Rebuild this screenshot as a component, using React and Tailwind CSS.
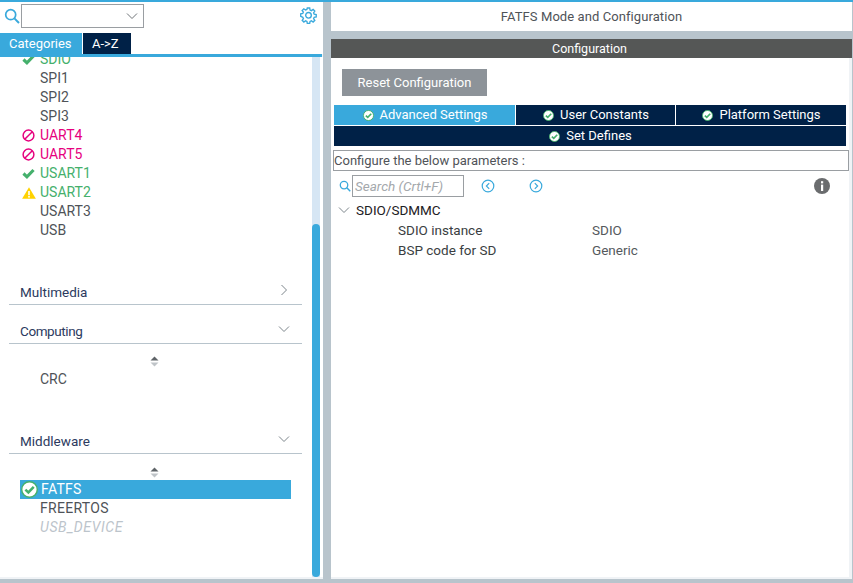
const font = { fontFamily: "Roboto, sans-serif" };

function Check() {
  return (
    <svg viewBox="0 0 14 12" width="13" height="11">
      <path d="M1.5 6 L5.3 9.6 L12.5 2.2" fill="none" stroke="#45b06c" strokeWidth="3.4" />
    </svg>
  );
}

function Ban() {
  return (
    <svg viewBox="0 0 14 14" width="13" height="13">
      <circle cx="7" cy="7" r="5.8" fill="none" stroke="#e6007e" strokeWidth="1.6" />
      <path d="M3.2 10.8 L10.8 3.2" stroke="#e6007e" strokeWidth="1.6" />
    </svg>
  );
}

function Warn() {
  return (
    <svg viewBox="0 0 14 12" width="14" height="12">
      <path d="M7 0.2 L13.9 11.8 L0.1 11.8 Z" fill="#ffd200" />
      <rect x="6.2" y="4" width="1.6" height="4.2" fill="#fff" />
      <rect x="6.2" y="9" width="1.6" height="1.6" fill="#fff" />
    </svg>
  );
}

function Okay({ size = 11 }) {
  return (
    <svg viewBox="0 0 12 12" width={size} height={size}>
      <circle cx="6" cy="6" r="5.5" fill="#ffffff" stroke="#45b06c" strokeWidth="1" />
      <path d="M3.1 6.1 L5.2 8.1 L9 4.1" fill="none" stroke="#45b06c" strokeWidth="1.8" />
    </svg>
  );
}

function Search({ size = 16 }) {
  return (
    <svg viewBox="0 0 16 16" width={size} height={size}>
      <circle cx="6.7" cy="6.7" r="5" fill="none" stroke="#39a9dc" strokeWidth="1.7" />
      <path d="M10.4 10.4 L15 15" stroke="#39a9dc" strokeWidth="2" />
    </svg>
  );
}

function Chevron({ dir = "down", color = "#7d868c", size = 12 }) {
  const d = dir === "down" ? "M1 3.5 L6 8.5 L11 3.5" : "M3.5 1 L8.5 6 L3.5 11";
  return (
    <svg viewBox="0 0 12 12" width={size} height={size}>
      <path d={d} fill="none" stroke={color} strokeWidth="1" />
    </svg>
  );
}

function Gear() {
  return (
    <svg viewBox="0 0 24 24" width="17" height="17" fill="none" stroke="#39a9dc" strokeWidth="1.9">
      <path d="M10.3 2h3.4l.5 2.9 1.9.8 2.4-1.7 2.4 2.4-1.7 2.4.8 1.9 2.9.5v3.4l-2.9.5-.8 1.9 1.7 2.4-2.4 2.4-2.4-1.7-1.9.8-.5 2.9h-3.4l-.5-2.9-1.9-.8-2.4 1.7-2.4-2.4 1.7-2.4-.8-1.9L1 13.7v-3.4l2.9-.5.8-1.9L3 5.5l2.4-2.4 2.4 1.7 1.9-.8z" transform="translate(0 -0.6)" />
      <circle cx="12" cy="11.7" r="4" />
    </svg>
  );
}

function Sort() {
  return (
    <svg viewBox="0 0 9 11" width="9" height="11">
      <path d="M4.5 0.5 L8.5 4.5 L0.5 4.5 Z" fill="#5f6468" />
      <path d="M0.5 6.5 L8.5 6.5 L4.5 10.5 Z" fill="#bfc4c8" />
    </svg>
  );
}

function Circ({ dir }) {
  return (
    <svg viewBox="0 0 14 14" width="14" height="14">
      <circle cx="7" cy="7" r="5.8" fill="none" stroke="#39a9dc" strokeWidth="1.2" />
      <path d={dir === "left" ? "M8.2 4.2 L5.4 7 L8.2 9.8" : "M5.8 4.2 L8.6 7 L5.8 9.8"} fill="none" stroke="#39a9dc" strokeWidth="1.2" />
    </svg>
  );
}

function Row({ icon, label, cls = "text-[#4f5358]" }) {
  return (
    <div className="h-[19px] flex items-center">
      <div className="w-[20px] ml-[20px] pl-[2px] flex items-center justify-start shrink-0">{icon}</div>
      <span className={"text-[14px] leading-[19px] " + cls}>{label}</span>
    </div>
  );
}

function Section({ label, dir = "down", cls, textCls = "" }) {
  return (
    <div className={"ml-[9px] w-[293px] h-[24px] border-b border-[#b8c4cc] flex items-center justify-between pl-[11px] pr-[12px] " + cls}>
      <span className={"text-[13.5px] leading-[20px] mb-[2px] text-[#2c3a5e] " + textCls}>{label}</span>
      <span className="mb-[5px]"><Chevron dir={dir} /></span>
    </div>
  );
}

function Tab({ label, active, cls }) {
  return (
    <div className={"h-[20px] flex items-center justify-center gap-[6px] pl-[1px] " + (active ? "bg-[#39a9dc] " : "bg-[#002147] ") + cls}>
      <Okay />
      <span className="text-[13px] text-white leading-[20px]">{label}</span>
    </div>
  );
}

export default function App() {
  return (
    <div style={font} className="w-[853px] h-[583px] bg-[#b8c4cc] flex flex-col overflow-hidden">
      <div className="h-[2px] bg-[#39a9dc] shrink-0" />
      <div className="flex h-[577px] gap-[8px]">
        {/* Left panel */}
        <div className="w-[323px] bg-[#f0f3f6] pb-[2px] flex flex-col shrink-0">
          <div className="h-[31px] bg-white flex items-start shrink-0">
            <span className="ml-[4px] mt-[6px]"><Search /></span>
            <div className="ml-[1px] mt-[2px] w-[123px] h-[24px] border border-[#9a9ea2] flex items-center justify-end pr-[5px]">
              <Chevron size={12} color="#6f7478" />
            </div>
            <span className="ml-auto mr-[6px] mt-[5px]"><Gear /></span>
          </div>
          <div className="flex h-[21px] bg-white shrink-0">
            <div className="w-[82px] bg-[#39a9dc] text-white text-[13px] leading-[21px] pl-[9px]">Categories</div>
            <div className="w-[48px] ml-[1px] bg-[#002147] text-white text-[13px] leading-[21px] pl-[9px]">A-&gt;Z</div>
          </div>
          <div className="h-[3px] bg-[#39a9dc] mr-[1px] shrink-0" />
          <div className="flex-1 flex overflow-hidden min-h-0 bg-white">
            <div className="w-[312px] shrink-0 mt-[-7px]">
              <Row icon={<Check />} label="SDIO" cls="text-[#45b06c]" />
              <Row label="SPI1" />
              <Row label="SPI2" />
              <Row label="SPI3" />
              <Row icon={<Ban />} label="UART4" cls="text-[#e6007e]" />
              <Row icon={<Ban />} label="UART5" cls="text-[#e6007e]" />
              <Row icon={<Check />} label="USART1" cls="text-[#45b06c]" />
              <Row icon={<Warn />} label="USART2" cls="text-[#45b06c]" />
              <Row label="USART3" />
              <Row label="USB" />
              <Section label="Multimedia" dir="right" cls="mt-[41px]" />
              <Section label="Computing" cls="mt-[15px]" textCls="tracking-[-0.4px]" />
              <div className="ml-[150px] mt-[12px] h-[11px] flex"><Sort /></div>
              <div className="mt-[3px]"><Row label="CRC" /></div>
              <Section label="Middleware" cls="mt-[41px]" />
              <div className="ml-[150px] mt-[13px] h-[11px] flex"><Sort /></div>
              <div className="mt-[2px] ml-[20px] w-[271px] h-[19px] bg-[#39a9dc] flex items-center">
                <span className="ml-[1px] w-[20px] flex"><Okay size={17} /></span>
                <span className="text-[14px] tracking-[0.3px] text-white leading-[19px]">FATFS</span>
              </div>
              <Row label="FREERTOS" cls="tracking-[0.3px] text-[#4f5358]" />
              <Row label="USB_DEVICE" cls="italic tracking-[0.6px] text-[#bcc4cb]" />
            </div>
            <div className="w-[8px] bg-[#d6e6f4] flex flex-col justify-end">
              <div className="h-[353px] bg-[#39a9dc] rounded-full" />
            </div>
          </div>
        </div>
        {/* Right panel */}
        <div className="flex-1 flex flex-col min-w-0 mr-[1px]">
          <div className="h-[29px] bg-white text-center text-[13px] tracking-[0.08px] leading-[29px] text-[#4f5358] shrink-0">FATFS Mode and Configuration</div>
          <div className="h-[8px] shrink-0" />
          <div className="h-[19px] bg-[#555756] text-center pr-[4px] text-[12.5px] leading-[19px] text-white shrink-0">Configuration</div>
          <div className="flex-1 bg-[#f0f3f6] pr-[3px] pb-[2px] flex flex-col min-h-0">
            <div className="flex-1 bg-white flex flex-col">
              <div className="ml-[11px] mt-[11px] w-[145px] h-[27px] bg-[#8d9399] text-white text-[13px] leading-[27px] text-center">Reset Configuration</div>
              <div className="ml-[3px] mt-[9px] w-[512px] flex flex-col">
                <div className="flex gap-[1px]">
                  <Tab label="Advanced Settings" active cls="w-[181px]" />
                  <Tab label="User Constants" cls="w-[159px]" />
                  <Tab label="Platform Settings" cls="flex-1" />
                </div>
                <div className="h-[1px]" />
                <Tab label="Set Defines" cls="w-full" />
              </div>
              <div className="ml-[2px] mt-[4px] w-[516px] h-[21px] border border-[#9a9ea2] text-[13px] leading-[19px] text-[#4f5358]">Configure the below parameters :</div>
              <div className="mt-[4px] flex items-center h-[22px]">
                <span className="ml-[8px] flex"><Search size={12} /></span>
                <div className="ml-[1px] w-[112px] h-[22px] border border-[#9a9ea2] italic text-[13.5px] leading-[20px] text-[#a4a8ac] pl-[2px]">Search (Crtl+F)</div>
                <span className="ml-[17px] flex"><Circ dir="left" /></span>
                <span className="ml-[34px] flex"><Circ dir="right" /></span>
                <svg viewBox="0 0 16 16" width="16" height="16" className="ml-auto mr-[19px]">
                  <circle cx="8" cy="8" r="8" fill="#6a6c6e" />
                  <rect x="7" y="6.6" width="2.2" height="6.4" fill="#fff" />
                  <rect x="7" y="3.2" width="2.2" height="2.2" fill="#fff" />
                </svg>
              </div>
              <div className="mt-[3px] h-[20px] flex items-center">
                <span className="ml-[7px] flex"><Chevron size={12} color="#7d868c" /></span>
                <span className="ml-[6px] text-[13.5px] leading-[20px] text-[#1d2024]">SDIO/SDMMC</span>
              </div>
              <div className="h-[20px] flex items-center text-[13.5px] text-[#3a3e42]">
                <span className="ml-[67px] w-[194px]">SDIO instance</span>
                <span className="text-[#55595d]">SDIO</span>
              </div>
              <div className="h-[20px] flex items-center text-[13.5px] text-[#3a3e42]">
                <span className="ml-[67px] w-[194px]">BSP code for SD</span>
                <span className="text-[#55595d]">Generic</span>
              </div>
            </div>
          </div>
        </div>
      </div>
    </div>
  );
}
